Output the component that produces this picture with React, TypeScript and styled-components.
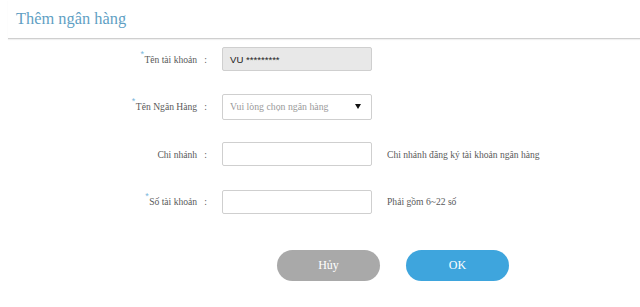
import styled, { createGlobalStyle } from "styled-components";

const GlobalStyle = createGlobalStyle`
  body {
    margin: 0;
    background: #ffffff;
    font-family: "Liberation Serif", "Times New Roman", serif;
  }
`;

const serif = `"Liberation Serif", "Times New Roman", serif`;

const Page = styled.div`
  width: 640px;
  height: 307px;
  overflow: hidden;
`;

const Header = styled.div`
  margin-left: 8px;
  height: 38px;
  border-bottom: 1px solid #cfcfcf;
  box-shadow: 0 1px 1px #f0f0f0;
  display: flex;
  align-items: flex-end;
`;

const Title = styled.h1`
  margin: 0 0 9px 8px;
  font-family: ${serif};
  font-size: 16.4px;
  font-weight: normal;
  color: #5f9fc4;
`;

const Form = styled.div`
  display: grid;
  grid-template-columns: 207px 150px auto;
  grid-auto-rows: 24px;
  column-gap: 15px;
  row-gap: 23.5px;
  align-items: center;
  padding-top: 8px;
`;

const Label = styled.label`
  justify-self: end;
  font-family: ${serif};
  font-size: 9.6px;
  color: #5a5a5a;
  position: relative;
  white-space: pre;
`;

const Star = styled.span`
  position: absolute;
  left: -4px;
  top: -5px;
  font-family: "Liberation Sans", Arial, sans-serif;
  font-size: 9px;
  color: #7ab8dc;
`;

const Field = styled.div<{ $disabled?: boolean; $tall?: boolean }>`
  height: ${(p) => (p.$tall ? "26px" : "24px")};
  box-sizing: border-box;
  border: 1px solid #cfcfcf;
  border-radius: 2px;
  background: ${(p) => (p.$disabled ? "#e8e8e8" : "#ffffff")};
  display: flex;
  align-items: center;
  justify-content: space-between;
  padding: 0 10px 0 7px;
`;

const Value = styled.span`
  font-family: "Liberation Sans", Arial, sans-serif;
  font-size: 9.6px;
  color: #222;
`;

const Placeholder = styled.span`
  font-family: ${serif};
  font-size: 9.8px;
  color: #9a9a9a;
`;

const Arrow = styled.span`
  width: 0;
  height: 0;
  border-left: 3.5px solid transparent;
  border-right: 3.5px solid transparent;
  border-top: 5px solid #111;
`;

const Hint = styled.span`
  font-family: ${serif};
  font-size: 9.6px;
  color: #5a5a5a;
`;

const Buttons = styled.div`
  display: flex;
  gap: 26px;
  margin: 36px 0 0 277px;
`;

const Button = styled.button<{ $primary?: boolean }>`
  width: 103px;
  height: 31px;
  border: none;
  border-radius: 16px;
  background: ${(p) => (p.$primary ? "#3ea5dd" : "#a9a9a9")};
  color: #fff;
  font-family: ${serif};
  font-size: 12px;
  padding: 0;
`;

export default function App() {
  return (
    <Page>
      <GlobalStyle />
      <Header>
        <Title>Thêm ngân hàng</Title>
      </Header>
      <Form>
        <Label>
          <Star>*</Star>Tên tài khoản{"   "}:
        </Label>
        <Field $disabled>
          <Value>VU *********</Value>
        </Field>
        <span />

        <Label>
          <Star>*</Star>Tên Ngân Hàng{"   "}:
        </Label>
        <Field $tall>
          <Placeholder>Vui lòng chọn ngân hàng</Placeholder>
          <Arrow />
        </Field>
        <span />

        <Label>Chi nhánh{"   "}:</Label>
        <Field />
        <Hint>Chi nhánh đăng ký tài khoản ngân hàng</Hint>

        <Label>
          <Star>*</Star>Số tài khoản{"   "}:
        </Label>
        <Field />
        <Hint>Phải gồm 6~22 số</Hint>
      </Form>
      <Buttons>
        <Button>Hủy</Button>
        <Button $primary>OK</Button>
      </Buttons>
    </Page>
  );
}
